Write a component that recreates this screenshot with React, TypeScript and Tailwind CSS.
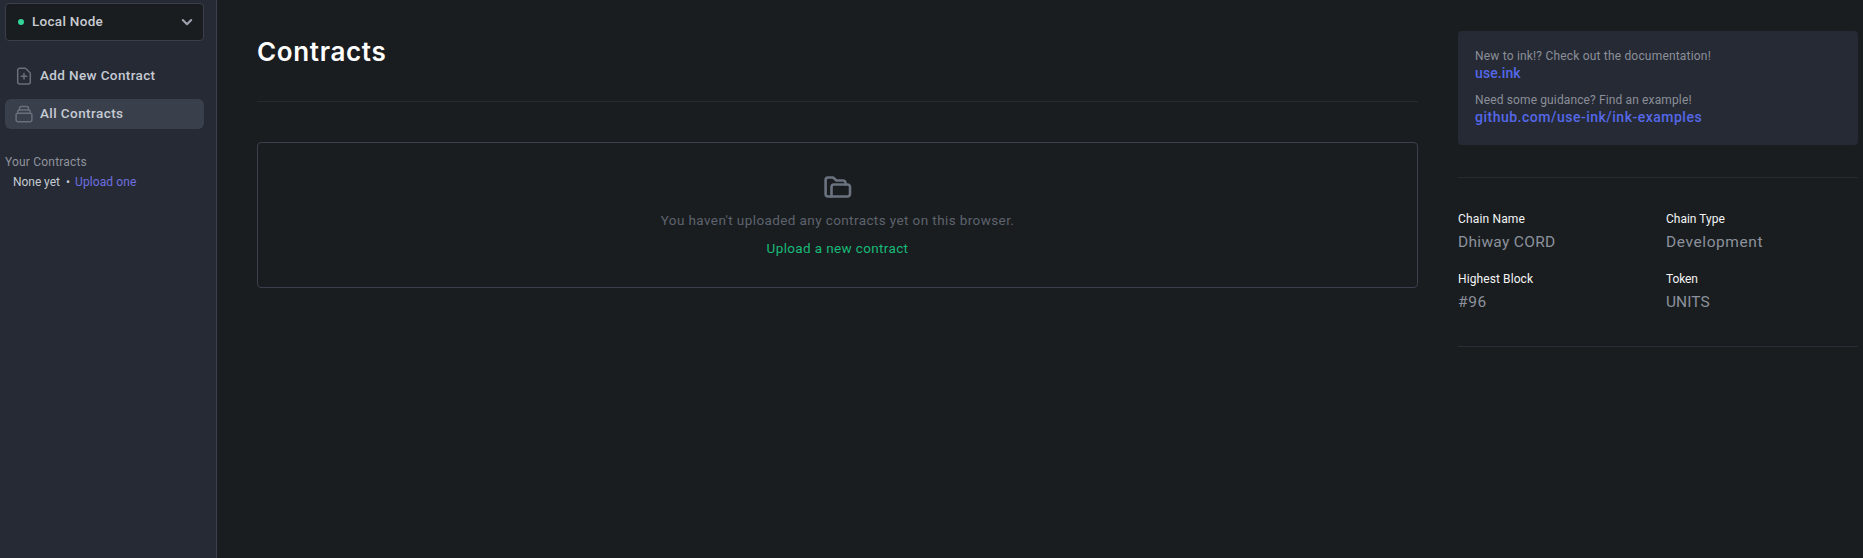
import type { ReactNode } from "react";

function ChevronDown() {
  return (
    <svg className="h-3 w-3" viewBox="0 0 12 12" fill="none" stroke="#a0a1ae" strokeWidth="2.1" strokeLinecap="round" strokeLinejoin="round">
      <path d="M1.800 4L6 8.200L10.200 4" />
    </svg>
  );
}

function DocumentAdd() {
  return (
    <svg className="h-5 w-5" viewBox="0 0 20 20" fill="none" stroke="#6b6e7b" strokeWidth="1.5" strokeLinecap="round" strokeLinejoin="round">
      <path d="M10 7.500v5.500M7.250 10.250h5.500M14.300 17.900H5.700a2 2 0 0 1-2-2V4.200a2 2 0 0 1 2-2h5.400a1 1 0 0 1 .7.300l4.200 4.200a1 1 0 0 1 .3.700v8.500a2 2 0 0 1-2 2z" />
    </svg>
  );
}

function Collection() {
  return (
    <svg className="h-5 w-5" viewBox="0 0 20 20" fill="none" stroke="#6b6e7b" strokeWidth="1.500" strokeLinecap="round" strokeLinejoin="round">
      <path d="M16.200 9.300H3.800m12.400 0a1.700 1.700 0 0 1 1.700 1.700v5a1.700 1.700 0 0 1-1.700 1.700H3.800A1.700 1.700 0 0 1 2.100 16v-5a1.700 1.700 0 0 1 1.700-1.700m12.400 0V7.600A1.700 1.700 0 0 0 14.500 5.900m-10.700 3.400V7.600A1.700 1.700 0 0 1 5.500 5.900m0 0V4.200a1.700 1.700 0 0 1 1.700-1.700h5.600a1.700 1.700 0 0 1 1.700 1.700v1.700m-9 0h9" />
    </svg>
  );
}

function Folders() {
  return (
    <svg className="h-6 w-7" viewBox="0 0 28 24" fill="none" stroke="#6b7280" strokeWidth="2.600" strokeLinecap="round" strokeLinejoin="round">
      <path d="M7.500 21.500H4A2.500 2.500 0 0 1 1.600 19V5A2.500 2.500 0 0 1 4 2.500h5l3.500 3h6.500a2.500 2.500 0 0 1 2.500 2.500v1.500" />
      <path d="M7.500 21.500V12A2.500 2.500 0 0 1 10 9.500h13.500A2.500 2.500 0 0 1 26 12v7a2.500 2.500 0 0 1-2.500 2.500z" />
    </svg>
  );
}

function Stat({ label, value }: { label: ReactNode; value: ReactNode }) {
  return (
    <div className="h-[60px] pt-px">
      <dt className="text-[12px] leading-4 text-[#f3f4f6]">{label}</dt>
      <dd className="mt-[3px] text-[15.5px] leading-6 text-[#8b919d]">{value}</dd>
    </div>
  );
}

export default function App() {
  return (
    <div className="flex h-[558px] w-full overflow-hidden whitespace-nowrap bg-[#1a1d1f] font-['Roboto',sans-serif]">
      <aside className="w-[217px] shrink-0 border-r border-[#3c3f4d] bg-[#262a34] pl-[5px] pt-[3px]">
        <button className="flex h-[38px] w-[199px] items-center rounded border border-[#3c3f4b] bg-[#1a1d1f] pl-3 pr-[10px]">
          <span className="h-[6px] w-[6px] rounded-full bg-[#34d399]" />
          <span className="ml-2 pb-0.5 text-[13.5px] font-medium leading-5 tracking-[0.29px] text-[#c9ccd3]">Local Node</span>
          <span className="ml-auto"><ChevronDown /></span>
        </button>
        <nav className="mt-5 flex w-[199px] flex-col gap-2 text-[13.5px] font-medium leading-5 text-[#c5cad3]">
          <a className="flex h-[30px] items-center gap-[6px] rounded-md pl-[9px]">
            <DocumentAdd />
            <span className="pb-0.5 tracking-[0.37px]">Add New Contract</span>
          </a>
          <a className="flex h-[30px] items-center gap-[6px] rounded-md bg-[#3a404b] pl-[9px]">
            <Collection />
            <span className="pb-0.5 tracking-[0.42px]">All Contracts</span>
          </a>
        </nav>
        <div className="mt-[25px] text-[12px] leading-4 tracking-[0.19px] text-[#8f939e]">Your Contracts</div>
        <div className="mt-1 flex pl-2 text-[12px] leading-4 text-[#c5cad3]">
          <span className="w-[53px] tracking-[-0.05px]">None yet</span>
          <span className="w-[9px]">•</span>
          <a className="tracking-[0.1px] text-[#6e6fe0]">Upload one</a>
        </div>
      </aside>
      <main className="ml-10 w-[1161px] shrink-0 pt-9">
        <h1 className="font-['Inter',sans-serif] text-[26px] font-semibold leading-8 tracking-[0.65px] text-white">Contracts</h1>
        <div className="mt-[33px] border-t border-[#272a30]" />
        <section className="mt-10 flex h-[146px] flex-col items-center rounded border border-[#3c3f4c] pt-8">
          <Folders />
          <p className="mt-[11px] text-[13.5px] leading-5 tracking-[0.4px] text-[#5d636e]">You haven't uploaded any contracts yet on this browser.</p>
          <a className="mt-2 text-[13.5px] leading-5 tracking-[0.36px] text-[#18b979]">Upload a new contract</a>
        </section>
      </main>
      <aside className="ml-10 w-[400px] shrink-0 pt-[31px]">
        <div className="h-[114px] rounded bg-[#262a34] px-[17px] pt-[17px]">
          <p className="text-[12px] leading-4 tracking-[0.19px] text-[#8b8f99]">New to ink!? Check out the documentation!</p>
          <a className="-mt-px block text-[14px] font-medium leading-5 tracking-[0.1px] text-[#5468e8]">use.ink</a>
          <p className="mt-[9px] text-[12px] leading-4 tracking-[0.13px] text-[#8b8f99]">Need some guidance? Find an example!</p>
          <a className="-mt-px block text-[14px] font-medium leading-5 tracking-[0.5px] text-[#5468e8]">github.com/use-ink/ink-examples</a>
        </div>
        <div className="mt-8 border-t border-[#272a30]" />
        <dl className="mt-8 grid grid-cols-[208px_1fr]">
          <Stat label={<span className="tracking-[0.16px]">Chain Name</span>} value={<span className="tracking-[0.31px]">Dhiway CORD</span>} />
          <Stat label="Chain Type" value={<span className="tracking-[0.59px]">Development</span>} />
          <Stat label={<span className="tracking-[0.1px]">Highest Block</span>} value={<span className="tracking-[0.6px]">#96</span>} />
          <Stat label={<span className="tracking-[-0.1px]">Token</span>} value={<span className="tracking-[0.07px]">UNITS</span>} />
        </dl>
        <div className="mt-4 border-t border-[#2a2d37]" />
      </aside>
    </div>
  );
}
